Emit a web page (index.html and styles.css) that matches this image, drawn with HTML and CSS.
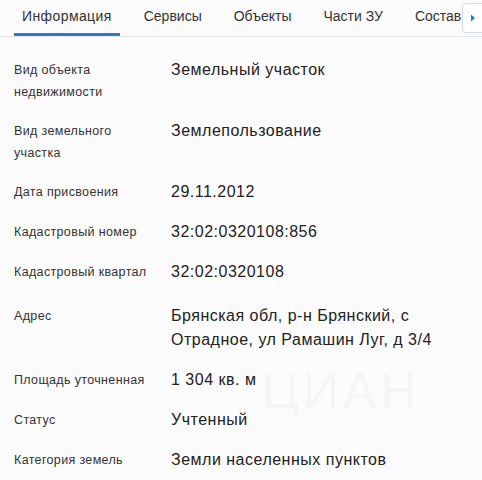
FILE: index.html
```html
<!DOCTYPE html>
<html lang="ru">
<head>
<meta charset="utf-8">
<link rel="stylesheet" href="styles.css">
</head>
<body>
<div class="page">
  <nav class="tabs">
    <div class="tab active">Информация</div>
    <div class="tab">Сервисы</div>
    <div class="tab">Объекты</div>
    <div class="tab">Части ЗУ</div>
    <div class="tab">Состав</div>
    <button class="more" aria-label="Ещё"><svg width="6" height="8" viewBox="0 0 6 8"><path d="M1 0.5 L5 4 L1 7.5 Z" fill="#1e7bd2"/></svg></button>
  </nav>
  <dl class="list">
    <div class="row"><dt>Вид объекта недвижимости</dt><dd>Земельный участок</dd></div>
    <div class="row"><dt>Вид земельного участка</dt><dd>Землепользование</dd></div>
    <div class="row"><dt>Дата присвоения</dt><dd>29.11.2012</dd></div>
    <div class="row"><dt>Кадастровый номер</dt><dd>32:02:0320108:856</dd></div>
    <div class="row"><dt>Кадастровый квартал</dt><dd>32:02:0320108</dd></div>
    <div class="row row-tall"><dt>Адрес</dt><dd>Брянская обл, р-н Брянский, с Отрадное, ул Рамашин Луг, д 3/4</dd></div>
    <div class="row"><dt>Площадь уточненная</dt><dd>1 304 кв. м</dd></div>
    <div class="row"><dt>Статус</dt><dd>Учтенный</dd></div>
    <div class="row"><dt>Категория земель</dt><dd>Земли населенных пунктов</dd></div>
  </dl>
  <div class="watermark">ЦИАН</div>
</div>
</body>
</html>
```

FILE: styles.css
```css
html, body {
  margin: 0;
  padding: 0;
  background: #fbfbfc;
}
.page {
  position: relative;
  width: 482px;
  height: 480px;
  overflow: hidden;
  font-family: "Liberation Sans", Arial, sans-serif;
  color: #222;
}
.tabs {
  display: flex;
  gap: 16px;
  height: 36px;
  padding-left: 14px;
  border-bottom: 1px solid #e5e7ea;
  box-sizing: content-box;
  position: relative;
}
.tab {
  padding: 7px 8px 0;
  font-size: 14px;
  line-height: 18px;
  color: #333;
  white-space: nowrap;
  border-bottom: 3px solid transparent;
  height: 26px;
  box-sizing: content-box;
}
.tab.active {
  border-bottom-color: #2d7ac8;
  letter-spacing: 0.4px;
}
.more {
  position: absolute;
  left: 462px;
  top: 3px;
  width: 30px;
  height: 30px;
  border: 1px solid #d8dbe0;
  border-radius: 4px;
  background: #fff;
  padding: 0 0 0 7px;
  display: flex;
  align-items: center;
}
.list {
  margin: 0;
  padding: 14px 0 0 14px;
}
.row {
  display: grid;
  grid-template-columns: 157px 1fr;
  padding: 8px 0 9px;
  align-items: start;
}
.row-tall {
  padding-top: 12px;
}
dt {
  font-size: 12.5px;
  line-height: 22px;
  letter-spacing: 0.35px;
  color: #333;
  width: 140px;
}
dd {
  margin: -1px 0 0;
  font-size: 16px;
  line-height: 24px;
  letter-spacing: 0.5px;
  color: #222;
  padding-right: 20px;
}
.watermark {
  position: absolute;
  left: 262px;
  top: 362px;
  font-size: 50px;
  letter-spacing: 4px;
  color: rgba(0, 0, 0, 0.025);
  font-family: "Liberation Sans", Arial, sans-serif;
  pointer-events: none;
}
```
